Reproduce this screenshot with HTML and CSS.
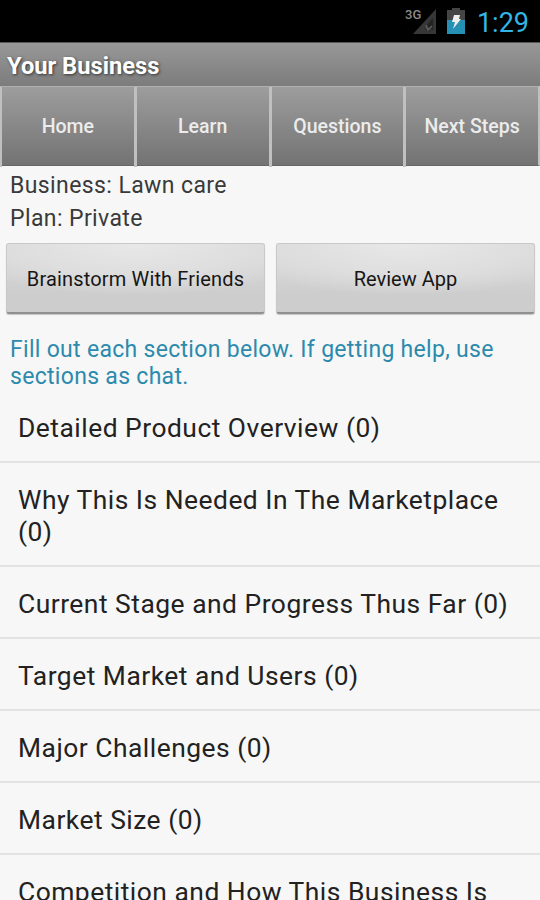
FILE: index.html
```html
<!DOCTYPE html>
<html lang="en">
<head>
    <meta charset="UTF-8">
    <meta name="viewport" content="width=device-width, initial-scale=1.0">
    <title>Your Business</title>
    <link rel="stylesheet" href="styles.css">
</head>
<body>
    <div class="status-bar">
        <svg class="signal" viewBox="0 0 32 28">
            <text x="0" y="12">3G</text>
            <path d="M31 2v25H8z" fill="#373737"></path>
            <path d="M21 19l7-8v12zM20 22l6 3" fill="#222" stroke="#2a2a2a" stroke-width="1"></path>
            <path d="M21 18l2 5 4-4" fill="none" stroke="#606060" stroke-width="1.5"></path>
        </svg>
        <svg class="battery" viewBox="0 0 18 28">
            <path d="M5 1h8v2h5v10H0V3h5z" fill="#454545"></path>
            <path d="M0 13h18v14H0z" fill="#258fb4"></path>
            <path d="M7 8h6l-1 4h2L6 22l2-7H5z" fill="#eee"></path>
        </svg>
        <span class="clock">1:29</span>
    </div>

    <header class="title-bar">
        <h1>Your Business</h1>
    </header>

    <nav class="tabs">
        <a class="tab">Home</a>
        <a class="tab">Learn</a>
        <a class="tab">Questions</a>
        <a class="tab">Next Steps</a>
    </nav>

    <main>
        <div class="info">
            <p>Business: Lawn care</p>
            <p>Plan: Private</p>
        </div>

        <div class="buttons">
            <button class="btn btn-brainstorm">Brainstorm With Friends</button>
            <button class="btn">Review App</button>
        </div>

        <p class="hint">Fill out each section below. If getting help, use sections as chat.</p>

        <ul class="sections">
            <li>Detailed Product Overview (0)</li>
            <li>Why This Is Needed In The Marketplace (0)</li>
            <li>Current Stage and Progress Thus Far (0)</li>
            <li>Target Market and Users (0)</li>
            <li>Major Challenges (0)</li>
            <li>Market Size (0)</li>
            <li>Competition and How This Business Is</li>
        </ul>
    </main>
</body>
</html>
```
FILE: styles.css
```css
* {
    margin: 0;
    padding: 0;
    box-sizing: border-box;
}

body {
    font-family: Roboto, sans-serif;
    background: #f7f7f7;
    color: #222;
    height: 900px;
    overflow: hidden;
}

.status-bar {
    height: 42px;
    background: #000;
    display: flex;
    align-items: center;
    justify-content: flex-end;
    padding-right: 11px;
}

.signal {
    width: 32px;
    height: 28px;
    margin-right: 10px;
}

.signal text {
    font-size: 13px;
    font-weight: 500;
    fill: #8a8a8a;
}

.battery {
    width: 18px;
    height: 28px;
    margin-right: 12px;
}

.clock {
    font-size: 27px;
    line-height: 42px;
    padding-top: 4px;
    color: #33b5e5;
}

.title-bar {
    height: 44px;
    padding: 1px 0 0 7px;
    background: linear-gradient(#989898, #7c7c7c);
    border-top: 1px solid #555;
}

h1 {
    font-size: 23.7px;
    font-weight: 700;
    line-height: 44px;
    color: #fff;
    text-shadow: 1px 1px 3px #333;
}

.tabs {
    display: grid;
    grid-template-columns: repeat(4, 1fr);
    height: 80px;
    margin-left: -1px;
    border-top: 1px solid #b0b0b0;
    border-right: 2px solid #c0c0c0;
    border-bottom: 1px solid #666;
    background: linear-gradient(#9d9d9d, #737373);
}

.tab {
    border-left: 3px solid #c0c0c0;
    font-size: 19.5px;
    font-weight: 500;
    line-height: 80px;
    text-align: center;
    color: #ececec;
    white-space: nowrap;
}

.info {
    padding: 3px 10px 0;
    font-size: 23px;
    line-height: 33px;
    color: #3a3a3a;
    letter-spacing: 0.4px;
}

.buttons {
    display: grid;
    grid-template-columns: 1fr 1fr;
    gap: 11px;
    padding: 8px 5px 0 6px;
}

.btn {
    height: 71px;
    padding-top: 2px;
    border: 1px solid #c9c9c9;
    border-bottom: 2px solid #909090;
    border-radius: 3px;
    background: radial-gradient(ellipse 75% 75% at 50% 0, #e8e8e8 0%, #dedede 60%, transparent 100%), linear-gradient(#dcdcdc, #cdcdcd 75%);
    box-shadow: 0 1px 1px rgba(0, 0, 0, 0.2);
    font-family: inherit;
    font-size: 20px;
    color: #161616;
}

.btn-brainstorm {
    letter-spacing: 0.15px;
}

.hint {
    padding: 22px 10px 1px;
    font-size: 23px;
    line-height: 27px;
    letter-spacing: 0.3px;
    color: #2c8aad;
}

.sections {
    list-style: none;
}

.sections li {
    padding: 21px 18px 17px;
    border-bottom: 2px solid #e3e3e3;
    font-size: 26.4px;
    line-height: 32px;
    letter-spacing: 0.5px;
}
```
